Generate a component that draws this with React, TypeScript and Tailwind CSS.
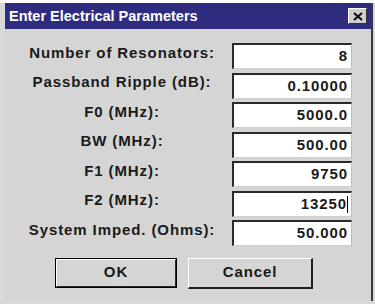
import React from "react";

const rows: { label: string; value: string; caret?: boolean }[] = [
  { label: "Number of Resonators:", value: "8" },
  { label: "Passband Ripple (dB):", value: "0.10000" },
  { label: "F0 (MHz):", value: "5000.0" },
  { label: "BW (MHz):", value: "500.00" },
  { label: "F1 (MHz):", value: "9750" },
  { label: "F2 (MHz):", value: "13250", caret: true },
  { label: "System Imped. (Ohms):", value: "50.000" },
];

export default function App() {
  return (
    <div
      className="w-[375px] h-[304px] bg-[#d9d9d9] border-t-[3px] border-white overflow-hidden"
      style={{ fontFamily: '"Liberation Sans", Arial, sans-serif' }}
    >
      <div className="ml-[5px] w-[368px] h-[298px] bg-[#d5d5d5] border-r-2 border-[#3a3a3a] flex flex-col">
        {/* Title bar */}
        <div className="h-[26px] bg-[#2f2c80] flex items-center justify-between pl-[4px] pr-[4px]">
          <span className="text-white font-bold text-[14.5px] leading-none">
            Enter Electrical Parameters
          </span>
          <div className="w-[19px] h-[16px] bg-[#d0d0d0] border border-t-white border-l-white border-r-[#303030] border-b-[#303030] flex items-center justify-center">
            <svg width="10" height="9" viewBox="0 0 10 9">
              <path d="M1 1 L9 8 M9 1 L1 8" stroke="#111" strokeWidth="2.2" />
            </svg>
          </div>
        </div>
        {/* Body */}
        <div className="pt-[14px] flex flex-col">
          {rows.map((r) => (
            <div key={r.label} className="flex h-[29.5px]">
              <div className="ml-[15px] w-[204px] h-[26px] flex items-center justify-center pb-[6px] text-[15px] tracking-[0.9px] font-bold text-[#1a1a1a] whitespace-nowrap">
                {r.label}
              </div>
              <div className="ml-[8px] w-[120px] h-[26px] bg-white border-t-2 border-l-2 border-r border-b border-t-[#2a2a2a] border-l-[#2a2a2a] border-r-[#bdbdbd] border-b-[#cfcfcf] flex items-center justify-end pr-[3px] text-[15px] tracking-[0.9px] font-bold text-[#1a1a1a]">
                <span>{r.value}</span>
                {r.caret && <span className="w-[1px] h-[17px] bg-black" />}
              </div>
            </div>
          ))}
          <div className="flex mt-[8px] ml-[50px] gap-[11px]">
            <button className="w-[122px] h-[30px] border border-black bg-[#d5d5d5] p-0">
              <div className="w-full h-full border border-t-white border-l-white border-r-[#2a2a2a] border-b-[#2a2a2a] flex items-center justify-center text-[15px] tracking-[0.9px] font-bold text-[#1a1a1a]">
                OK
              </div>
            </button>
            <button className="w-[125px] h-[31px] bg-[#d5d5d5] border-t border-l border-t-white border-l-white border-r-2 border-b-2 border-r-[#1e1e1e] border-b-[#1e1e1e] flex items-center justify-center text-[15px] tracking-[0.9px] font-bold text-[#1a1a1a]">
              Cancel
            </button>
          </div>
        </div>
      </div>
    </div>
  );
}
